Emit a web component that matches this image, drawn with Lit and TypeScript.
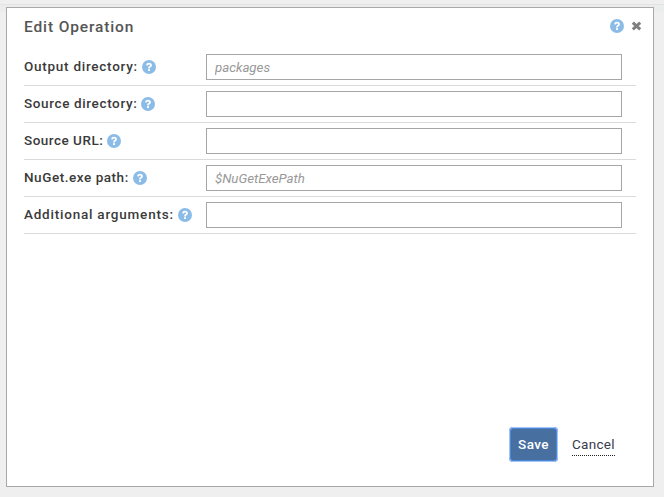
import { LitElement, html, css, svg } from "lit";
import { customElement, property } from "lit/decorators.js";

interface Field {
  label: string;
  placeholder: string;
  tracking: number;
}

const FIELDS: Field[] = [
  { label: "Output directory:", placeholder: "packages", tracking: 0.74 },
  { label: "Source directory:", placeholder: "", tracking: 0.63 },
  { label: "Source URL:", placeholder: "", tracking: 0.5 },
  { label: "NuGet.exe path:", placeholder: "$NuGetExePath", tracking: 0.54 },
  { label: "Additional arguments:", placeholder: "", tracking: 0.78 },
];

@customElement("help-icon")
export class HelpIcon extends LitElement {
  static styles = css`
    :host { display: block; width: 14px; height: 14px; flex: none; }
    svg { display: block; }
  `;
  render() {
    return html`<svg width="14" height="14" viewBox="0 0 14 14">
      ${svg`<circle cx="7" cy="7" r="7" fill="#8bbce8"/>
      <path d="M4.9 5.3 Q5.2 3.6 7 3.6 Q9 3.6 9 5.2 Q9 6.2 7.8 6.8 Q7 7.2 7 8.5" fill="none" stroke="#fff" stroke-width="1.8"/>
      <rect x="6" y="9.2" width="2" height="1.8" fill="#fff"/>`}
    </svg>`;
  }
}

@customElement("field-row")
export class FieldRow extends LitElement {
  @property({ attribute: false }) field!: Field;
  static styles = css`
    :host {
      display: flex;
      box-sizing: border-box;
      height: 37px;
      padding: 5px 14px 5px 0;
      border-bottom: 1px solid #dadada;
    }
    .label {
      display: flex;
      gap: 4px;
      width: 182px;
      height: 26px;
      padding-top: 6px;
      box-sizing: border-box;
      flex: none;
    }
    .text {
      font-size: 13.5px;
      font-weight: 500;
      line-height: 14px;
      margin-top: -1px;
      white-space: nowrap;
      color: #3a3a3a;
    }
    input {
      flex: 1;
      min-width: 0;
      height: 26px;
      margin: 0;
      box-sizing: border-box;
      border: 1px solid #a6a6a6;
      border-radius: 0;
      padding: 1px 8px 1px;
      background: #fff;
      font: 13.3px Roboto, sans-serif;
      letter-spacing: -0.04px;
      outline: none;
    }
    input::placeholder { color: #999; font-style: italic; opacity: 1; }
  `;
  render() {
    const f = this.field;
    return html`<div class="label">
        <span class="text" style="letter-spacing:${f.tracking}px">${f.label}</span>
        <help-icon></help-icon>
      </div>
      <input type="text" aria-label=${f.label} placeholder=${f.placeholder} />`;
  }
}

@customElement("app-root")
export class AppRoot extends LitElement {
  static styles = css`
    :host {
      display: block;
      box-sizing: border-box;
      height: 497px;
      padding: 7px 10px 10px 6px;
      background: linear-gradient(#efefef 4px, #e3e3e3 4px 5px, #ebeded 5px 12px, #efefef 12px);
      font-family: Roboto, sans-serif;
      overflow: hidden;
    }
    .dialog {
      display: flex;
      flex-direction: column;
      box-sizing: border-box;
      width: 648px;
      height: 480px;
      border: 1px solid #a8a8a8;
      padding: 0 17px 24px;
      background: #fff;
    }
    header {
      display: flex;
      align-items: center;
      height: 41px;
      box-sizing: border-box;
      padding-bottom: 5px;
      margin-right: -6px;
      gap: 7px;
    }
    h1 {
      flex: 1;
      margin: 0;
      padding-top: 1px;
      font-size: 15.5px;
      font-weight: 500;
      line-height: 20px;
      letter-spacing: 0.87px;
      color: #555;
    }
    .close { display: block; }
    footer {
      display: flex;
      align-items: center;
      justify-content: flex-end;
      gap: 14px;
      margin-top: auto;
      padding-right: 21px;
    }
    button {
      width: 49px;
      height: 35px;
      padding: 0 0 2px;
      border: 2px solid #4a86d8;
      border-radius: 4px;
      outline: 1px solid #a4c4f4;
      outline-offset: -1px;
      background: #476f9f;
      color: #fff;
      font: 500 13.5px Roboto, sans-serif;
      letter-spacing: 0.4px;
    }
    .cancel {
      width: 43px;
      height: 22px;
      box-sizing: border-box;
      border-bottom: 1px dotted #222;
      font-size: 13.5px;
      line-height: 20px;
      letter-spacing: 0.3px;
      white-space: nowrap;
      color: #3b3b4d;
    }
  `;
  render() {
    return html`<section class="dialog">
      <header>
        <h1>Edit Operation</h1>
        <help-icon></help-icon>
        <svg class="close" width="11" height="10" viewBox="0 0 11 10">
          <path d="M1.8 1.6 L9.2 8.4 M9.2 1.6 L1.8 8.4" stroke="#808080" stroke-width="3" fill="none" />
        </svg>
      </header>
      ${FIELDS.map((f) => html`<field-row .field=${f}></field-row>`)}
      <footer>
        <button>Save</button>
        <a class="cancel">Cancel</a>
      </footer>
    </section>`;
  }
}
